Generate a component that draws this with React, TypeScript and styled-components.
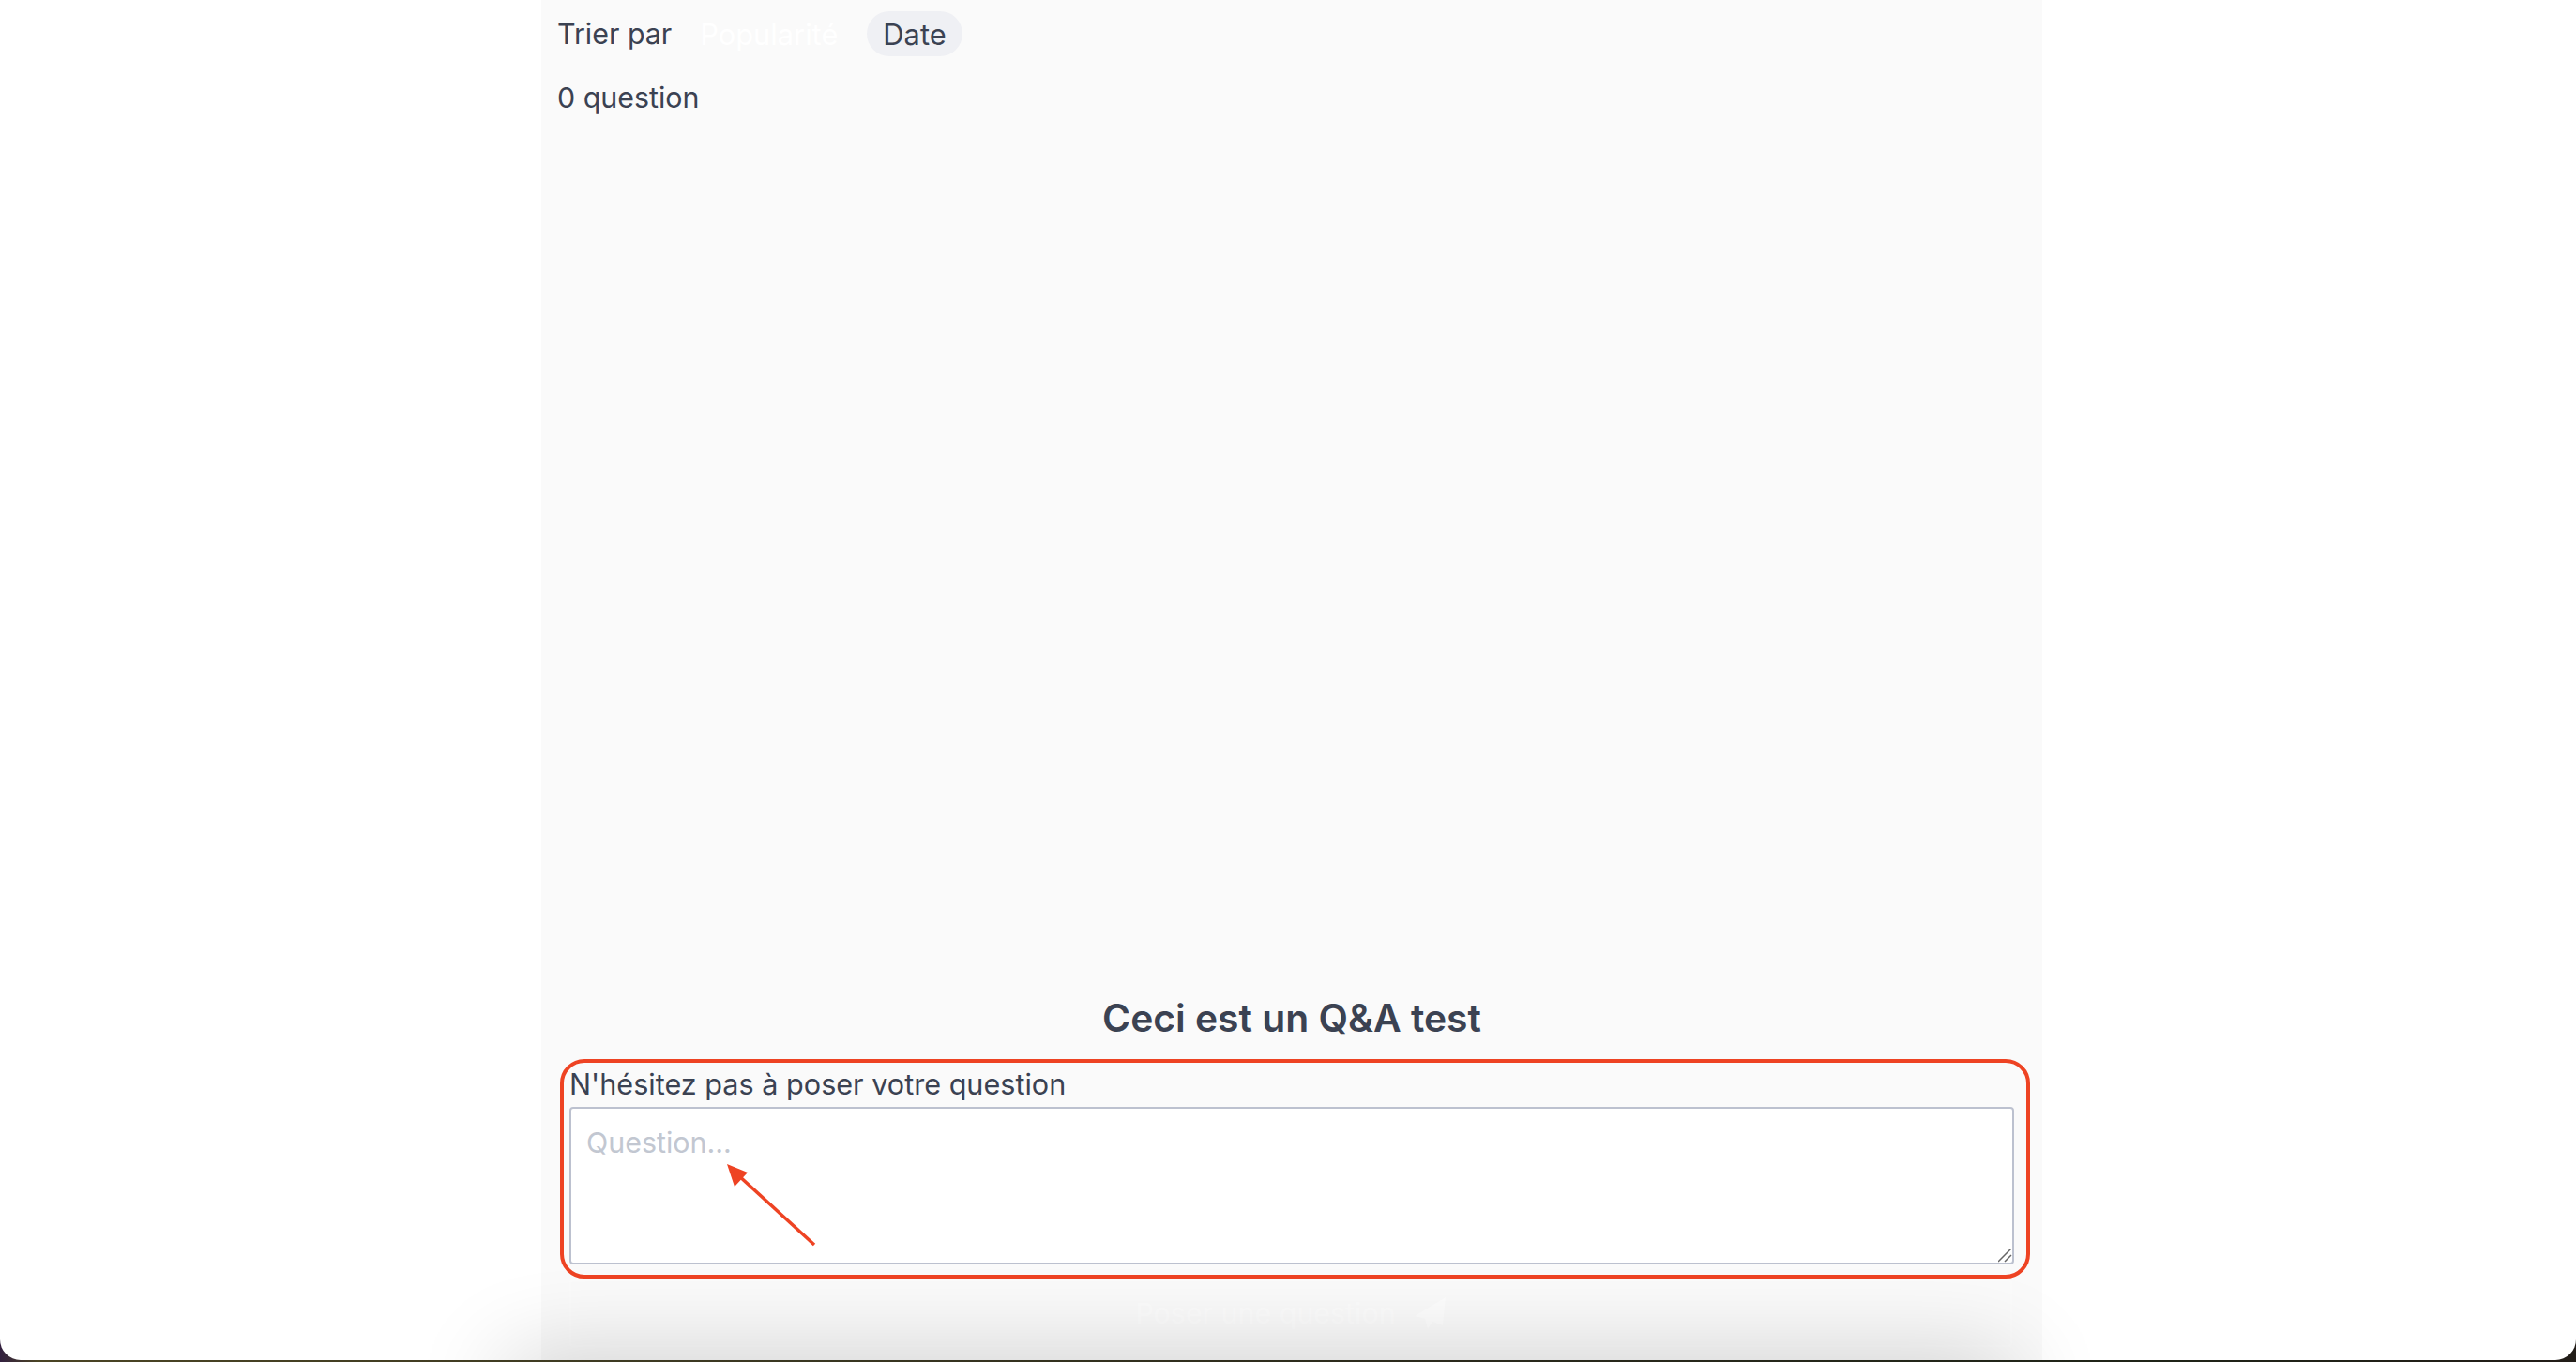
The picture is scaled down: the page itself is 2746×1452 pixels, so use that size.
import React from "react";
import styled, { createGlobalStyle } from "styled-components";

const Global = createGlobalStyle`
  html, body { margin: 0; padding: 0; height: 100%; overflow: hidden; }
  body { font-family: Inter, "Liberation Sans", sans-serif; color: #3b4252; }
  * { box-sizing: border-box; }
`;

const Desktop = styled.div`
  position: relative;
  width: 2746px;
  height: 1452px;
  background: linear-gradient(to right, #33203f 0, #4a4424 40px, #3d3a22 700px, #2b2a1c 1500px, #1f2418 2300px, #221d18 100%);
  overflow: hidden;
`;

const Window = styled.div`
  position: relative;
  height: 1450px;
  background: #fff;
  border-radius: 0 0 22px 22px;
  overflow: hidden;
  display: flex;
  justify-content: center;
  padding-left: 8px;
`;

const Panel = styled.main`
  width: 1600px;
  background: #fafafa;
  display: flex;
  flex-direction: column;
  padding: 12px 30px 14px 17px;
`;

const SortBar = styled.div`
  display: flex;
  align-items: center;
  height: 48px;
  font-size: 30.4px;
`;

const SortLabel = styled.span`
  margin-right: 13px;
`;

const SortButton = styled.button<{ $active?: boolean }>`
  height: 48px;
  padding: 0 17px;
  margin-right: 14px;
  border: 0;
  border-radius: 24px;
  font: inherit;
  font-size: 30.8px;
  color: ${(p) => (p.$active ? "#3b4252" : "#fff")};
  background: ${(p) => (p.$active ? "#eff0f4" : "transparent")};
`;

const Count = styled.p`
  margin: 24px 0 0;
  font-size: 30.4px;
  line-height: 40px;
`;

const Spacer = styled.div`
  flex: 1;
`;

const Title = styled.h2`
  margin: 0 0 24px;
  text-align: center;
  font-size: 40.8px;
  line-height: 60px;
  font-weight: 600;
  color: #3b4252;
  padding-left: 13px;
`;

const Form = styled.form`
  display: flex;
  flex-direction: column;
  padding-left: 13px;
`;

const Label = styled.label`
  font-size: 30.6px;
  line-height: 34px;
  margin-bottom: 7px;
  margin-top: 0;
`;

const Question = styled.textarea`
  display: block;
  width: 1540px;
  height: 168px;
  padding: 16px 16px;
  font: 30.4px/40px Inter, "Liberation Sans", sans-serif;
  background: #fff;
  border: 2px solid #bcc1cf;
  border-radius: 4px;
  outline: none;
  &::placeholder { color: #c2c7d1; opacity: 1; }
  &::-webkit-resizer {
    background: url("data:image/svg+xml,%3Csvg xmlns='http://www.w3.org/2000/svg' width='15' height='15'%3E%3Cpath d='M0 14 L14 0 M7 14 L14 7' stroke='%23666' stroke-width='1.5' fill='none'/%3E%3C/svg%3E") no-repeat;
  }
`;

const Submit = styled.button`
  margin-top: 16px;
  width: 1538px;
  height: 72px;
  display: flex;
  align-items: center;
  justify-content: center;
  gap: 20px;
  font: 30.4px Inter, "Liberation Sans", sans-serif;
  color: rgba(255, 255, 255, 0.55);
  background: transparent;
  border: 2px solid rgba(255, 255, 255, 0.3);
  border-radius: 4px;
`;

const Highlight = styled.div`
  position: absolute;
  left: 597px;
  top: 1129px;
  width: 1567px;
  height: 234px;
  border: 4px solid #ee4323;
  border-radius: 26px;
  pointer-events: none;
`;

const Arrow = styled.svg`
  position: absolute;
  left: 760px;
  top: 1230px;
  width: 120px;
  height: 110px;
  pointer-events: none;
`;

const BottomShade = styled.div`
  position: absolute;
  left: 560px;
  right: 620px;
  bottom: -60px;
  height: 40px;
  box-shadow: 0 0 100px 20px rgba(0, 0, 0, 0.2);
  pointer-events: none;
`;

export default function App() {
  return (
    <Desktop>
      <Global />
      <Window>
        <Panel>
          <SortBar>
            <SortLabel>Trier par</SortLabel>
            <SortButton>Popularité</SortButton>
            <SortButton $active>Date</SortButton>
          </SortBar>
          <Count>0 question</Count>
          <Spacer />
          <Title>Ceci est un Q&amp;A test</Title>
          <Form>
            <Label htmlFor="q">N'hésitez pas à poser votre question</Label>
            <Question id="q" placeholder="Question..." />
            <Submit type="button">
              Poser une question
              <svg width="34" height="34" viewBox="0 0 34 34" fill="currentColor">
                <path d="M33 0 L0 20 L11 23 L14 34 L19 26 L30 30 Z" />
              </svg>
            </Submit>
          </Form>
        </Panel>
        <Highlight />
        <Arrow viewBox="0 0 120 110">
          <line x1="108" y1="97" x2="26" y2="22" stroke="#ee4323" strokeWidth="3.5" />
          <path d="M15 11 L37 20 L23 35 Z" fill="#ee4323" />
        </Arrow>
        <BottomShade />
      </Window>
    </Desktop>
  );
}
